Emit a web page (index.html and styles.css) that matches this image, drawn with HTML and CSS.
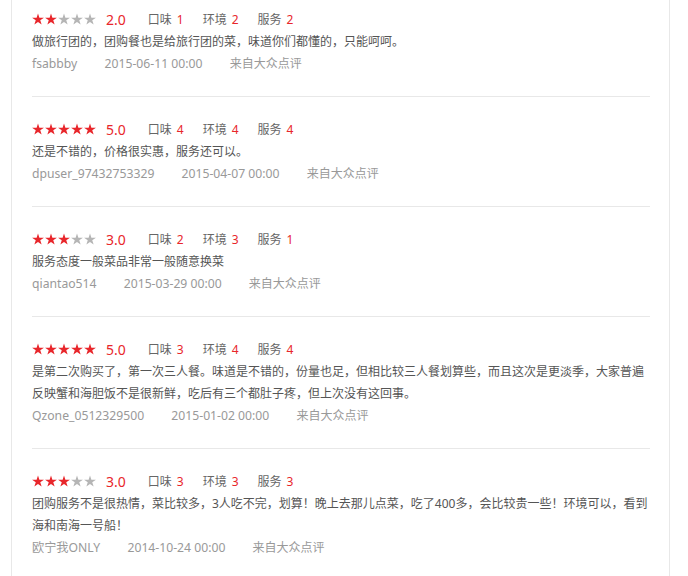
FILE: index.html
```html
<!DOCTYPE html>
<html lang="zh-CN">

<head>
    <meta charset="UTF-8">
    <meta name="viewport" content="width=device-width, initial-scale=1.0">
    <title>评价</title>
    <link rel="stylesheet" href="styles.css">
</head>

<body>
    <svg width="0" height="0" class="defs">
        <symbol id="star" viewBox="0 0 12 12">
            <path d="M6 0.4 L7.39 4.68 L11.9 4.68 L8.25 7.33 L9.64 11.62 L6 8.97 L2.36 11.62 L3.75 7.33 L0.1 4.68 L4.61 4.68Z" />
        </symbol>
    </svg>

    <div class="box">
        <ul class="reviews">
            <!-- 1 -->
            <li class="review">
                <div class="rate">
                    <span class="stars">
                        <svg class="on"><use href="#star" /></svg>
                        <svg class="on"><use href="#star" /></svg>
                        <svg><use href="#star" /></svg>
                        <svg><use href="#star" /></svg>
                        <svg><use href="#star" /></svg>
                    </span>
                    <span class="score">2.0</span>
                    <span class="item">口味<em>1</em></span>
                    <span class="item">环境<em>2</em></span>
                    <span class="item">服务<em>2</em></span>
                </div>
                <p class="text">做旅行团的，团购餐也是给旅行团的菜，味道你们都懂的，只能呵呵。</p>
                <p class="meta">
                    <span>fsabbby</span>
                    <span>2015-06-11 00:00</span>
                    <span class="from">来自大众点评</span>
                </p>
            </li>
            <!-- 2 -->
            <li class="review">
                <div class="rate">
                    <span class="stars">
                        <svg class="on"><use href="#star" /></svg>
                        <svg class="on"><use href="#star" /></svg>
                        <svg class="on"><use href="#star" /></svg>
                        <svg class="on"><use href="#star" /></svg>
                        <svg class="on"><use href="#star" /></svg>
                    </span>
                    <span class="score">5.0</span>
                    <span class="item">口味<em>4</em></span>
                    <span class="item">环境<em>4</em></span>
                    <span class="item">服务<em>4</em></span>
                </div>
                <p class="text">还是不错的，价格很实惠，服务还可以。</p>
                <p class="meta">
                    <span>dpuser_97432753329</span>
                    <span>2015-04-07 00:00</span>
                    <span class="from">来自大众点评</span>
                </p>
            </li>
            <!-- 3 -->
            <li class="review">
                <div class="rate">
                    <span class="stars">
                        <svg class="on"><use href="#star" /></svg>
                        <svg class="on"><use href="#star" /></svg>
                        <svg class="on"><use href="#star" /></svg>
                        <svg><use href="#star" /></svg>
                        <svg><use href="#star" /></svg>
                    </span>
                    <span class="score">3.0</span>
                    <span class="item">口味<em>2</em></span>
                    <span class="item">环境<em>3</em></span>
                    <span class="item">服务<em>1</em></span>
                </div>
                <p class="text">服务态度一般菜品非常一般随意换菜</p>
                <p class="meta">
                    <span>qiantao514</span>
                    <span>2015-03-29 00:00</span>
                    <span class="from">来自大众点评</span>
                </p>
            </li>
            <!-- 4 -->
            <li class="review">
                <div class="rate">
                    <span class="stars">
                        <svg class="on"><use href="#star" /></svg>
                        <svg class="on"><use href="#star" /></svg>
                        <svg class="on"><use href="#star" /></svg>
                        <svg class="on"><use href="#star" /></svg>
                        <svg class="on"><use href="#star" /></svg>
                    </span>
                    <span class="score">5.0</span>
                    <span class="item">口味<em>3</em></span>
                    <span class="item">环境<em>4</em></span>
                    <span class="item">服务<em>4</em></span>
                </div>
                <p class="text">是第二次购买了，第一次三人餐。味道是不错的，份量也足，但相比较三人餐划算些，而且这次是更淡季，大家普遍反映蟹和海胆饭不是很新鲜，吃后有三个都肚子疼，但上次没有这回事。</p>
                <p class="meta">
                    <span>Qzone_0512329500</span>
                    <span>2015-01-02 00:00</span>
                    <span class="from">来自大众点评</span>
                </p>
            </li>
            <!-- 5 -->
            <li class="review">
                <div class="rate">
                    <span class="stars">
                        <svg class="on"><use href="#star" /></svg>
                        <svg class="on"><use href="#star" /></svg>
                        <svg class="on"><use href="#star" /></svg>
                        <svg><use href="#star" /></svg>
                        <svg><use href="#star" /></svg>
                    </span>
                    <span class="score">3.0</span>
                    <span class="item">口味<em>3</em></span>
                    <span class="item">环境<em>3</em></span>
                    <span class="item">服务<em>3</em></span>
                </div>
                <p class="text">团购服务不是很热情，菜比较多，3人吃不完，划算！晚上去那儿点菜，吃了400多，会比较贵一些！环境可以，看到海和南海一号船！</p>
                <p class="meta">
                    <span>欧宁我ONLY</span>
                    <span>2014-10-24 00:00</span>
                    <span class="from">来自大众点评</span>
                </p>
            </li>
        </ul>
    </div>
</body>

</html>
```

FILE: styles.css
```css
* {
    margin: 0;
    padding: 0;
}

body {
    background: #fff;
    font-family: "Noto Sans", "Noto Sans CJK SC", sans-serif;
    font-size: 12px;
    color: #555;
}

.defs {
    position: absolute;
}

/* box */
.box {
    width: 618px;
    min-height: 576px;
    margin-left: 11px;
    padding: 0 19px 0 20px;
    border-left: 1px solid #e8e8e8;
    border-right: 1px solid #e8e8e8;
}

.reviews {
    list-style: none;
}

.review {
    padding: 20px 0 21px;
    border-bottom: 1px solid #e8e8e8;
}

.review:first-child {
    padding-top: 7px;
}

.review:last-child {
    border-bottom: none;
}

/* rate */
.rate {
    display: flex;
    align-items: center;
    height: 24px;
    color: #666;
}

.stars {
    display: flex;
    gap: 1px;
}

.stars svg {
    width: 12px;
    height: 12px;
    fill: #b5b5b5;
}

.stars svg.on {
    fill: #e8262b;
}

.score {
    margin-left: 10px;
    margin-right: 3px;
    font-size: 14px;
    color: #e8262b;
}

.item {
    margin-left: 19px;
}

.item em {
    font-style: normal;
    color: #e8262b;
    margin-left: 5px;
}

/* text */
.text {
    line-height: 22px;
}

.meta {
    line-height: 22px;
    font-size: 12.2px;
    color: #999;
}

.meta span {
    margin-right: 24px;
}

.meta .from {
    font-size: 12px;
}
```
